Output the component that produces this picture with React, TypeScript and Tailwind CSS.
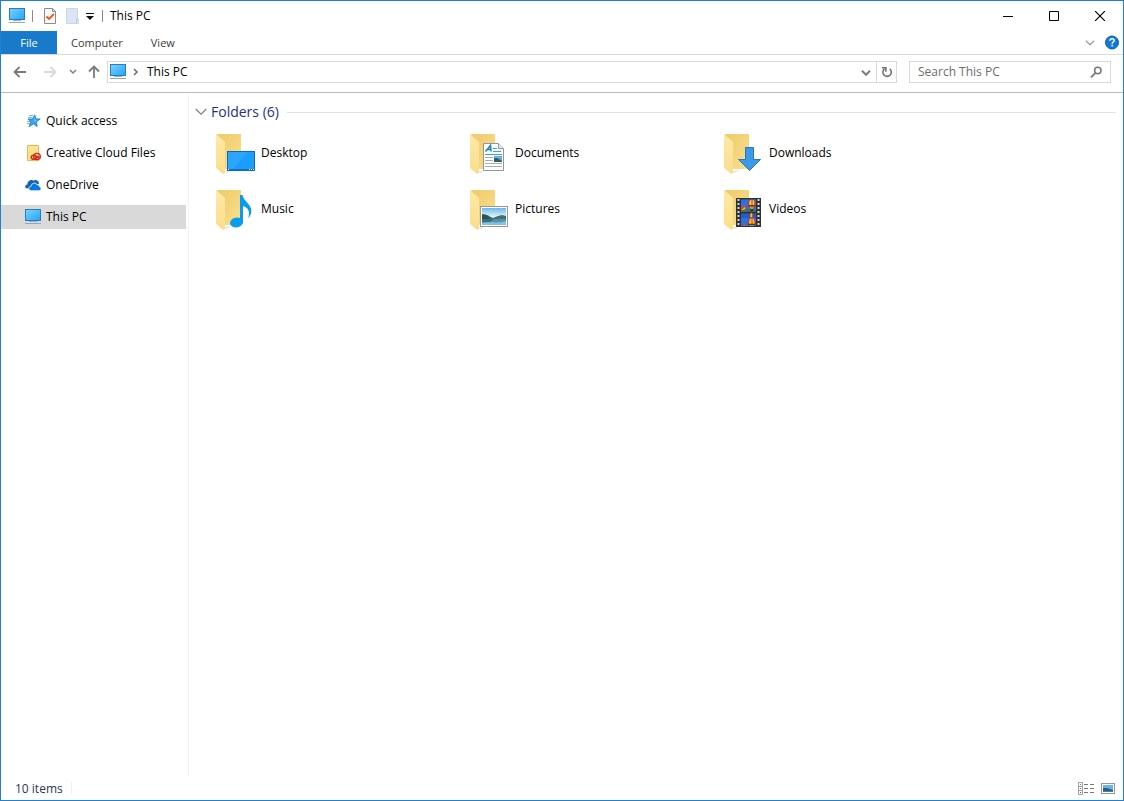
import React from 'react';

interface IconProps {
  className?: string;
}

interface FolderEntry {
  name: string;
  overlay: React.ReactNode;
}

const MonitorIcon: React.FC<IconProps> = ({ className }) => (
  <svg width="16" height="16" viewBox="0 0 16 16" className={className} aria-hidden="true">
    <defs>
      <linearGradient id="screen" x1="0" y1="0" x2="1" y2="1">
        <stop offset="0" stopColor="#7fd0ff" />
        <stop offset="0.5" stopColor="#4dbcff" />
        <stop offset="1" stopColor="#22a4ff" />
      </linearGradient>
    </defs>
    <rect x="0.5" y="0.5" width="15" height="11" fill="url(#screen)" stroke="#2d7db5" />
    <rect x="6" y="12" width="4" height="1" fill="#c3d0dc" />
    <rect x="4" y="12" width="8" height="1" fill="#9fb1c4" />
    <rect x="0" y="14" width="16" height="1" fill="#93a5ba" />
  </svg>
);

const CheckDocIcon: React.FC = () => (
  <svg width="12" height="16" viewBox="0 0 12 16" aria-hidden="true">
    <path d="M.5.5h8l3 3v12H.5z" fill="#f8f8f8" stroke="#8c8c8c" />
    <path d="M8.5.5v3h3" fill="none" stroke="#8c8c8c" />
    <path d="M2.5 8.500l2.500 2.500 5-5" fill="none" stroke="#f0561d" strokeWidth="1.800" />
  </svg>
);

const PaleFolderIcon: React.FC = () => (
  <svg width="13" height="16" viewBox="0 0 13 16" aria-hidden="true">
    <path d="M.5.5h11v10l1 1v4H.5z" fill="#dbe5f5" stroke="#c9d6ea" />
    <path d="M10.5 15v-4h2" fill="none" stroke="#bccbe2" />
  </svg>
);

const ChevronDown: React.FC<IconProps> = ({ className }) => (
  <svg width="10" height="6" viewBox="0 0 10 6" className={className} fill="none" stroke="currentColor" aria-hidden="true">
    <path d="M1 .8l4 4 4-4" />
  </svg>
);

const BackArrow: React.FC<IconProps> = ({ className }) => (
  <svg width="14" height="12" viewBox="0 0 14 12" className={className} fill="none" stroke="currentColor" strokeWidth="1.8" aria-hidden="true">
    <path d="M13 6H2M6.5 1L1.500 6l5 5" />
  </svg>
);

const StarIcon: React.FC = () => (
  <svg width="16" height="16" viewBox="0 0 16 16" aria-hidden="true">
    <path d="M9.8 1.800l1 4 4.400.2-3.600 2.800.6 4.700-3.900-2.500-4.200 2.700 1.600-4.900L3 6h4.300z" fill="#35a5e8" stroke="#1b7fc4" strokeWidth=".8" />
    <path d="M4 2.500h4M3 4.500h4M2 8.500h3M2 10.500h3" stroke="#6fbdea" />
    <path d="M9.500 4l.8 3 2.500.1-3.800 2z" fill="#5fc0f4" />
  </svg>
);

const CreativeCloudIcon: React.FC = () => (
  <svg width="16" height="16" viewBox="0 0 16 16" aria-hidden="true">
    <path d="M2.5.5h11v15h-11z" fill="#fce48e" stroke="#e5b951" />
    <g fill="none" stroke="#d9251d" strokeWidth="1.400">
      <ellipse cx="8.800" cy="12.300" rx="2.600" ry="2.100" />
      <ellipse cx="12" cy="11.500" rx="3.300" ry="3.100" />
      <path d="M8.500 10.800c2-.8 3 2.200 5 2.200 1.200-.2 1-2-.5-2-1.500.2-2 2.500-4 2.500" strokeWidth="1.100" />
    </g>
  </svg>
);

const OneDriveIcon: React.FC = () => (
  <svg width="16" height="16" viewBox="0 0 16 16" aria-hidden="true">
    <path d="M2.500 11.500C-.6 11.500-.5 7.600 2.300 7.400 2.300 4 6 2 8.500 3.600c2-1.600 5.400-.3 5.500 2.800l-6 5z" fill="#1263b8" />
    <path d="M6.500 13.800c-3.600 0-3.500-4.400-.4-4.600.4-3.600 5-4.200 6.200-1.200 2-.3 2.500 1 2.300 1.800 2.200.6 1.700 4-.7 4z" fill="#0a78d8" stroke="#fff" strokeWidth=".8" />
  </svg>
);

const DesktopOverlay: React.FC = () => (
  <>
    <rect x="11.500" y="17.500" width="27" height="19" fill="#1a9dff" stroke="#0c6db8" />
    <path d="M12 18h20L17 35h-5z" fill="#2ba5ff" />
    <path d="M12 35.500h26" stroke="#0b72bf" />
    <path d="M12 35.500h1M33 35.500h1M35 35.500h1M37 35.500h1" stroke="#fff" />
  </>
);

const MusicOverlay: React.FC = () => (
  <>
    <ellipse cx="20.500" cy="32.500" rx="6.500" ry="4.900" transform="rotate(-12 20.5 32.5)" fill="#079bf2" />
    <path d="M24 5h2.500c.7 6 9 9 8.800 16-.2 3-1 5-3 7.500 1.800-6.500.5-11-5.300-12.500v17h-3z" fill="#079bf2" />
  </>
);

const DocumentOverlay: React.FC = () => (
  <>
    <path d="M13.500 9.500h15l5 5v22h-20z" fill="#fff" stroke="#8f979d" />
    <path d="M28.500 9.500v5h5" fill="#e6e9eb" stroke="#8f979d" />
    <path d="M15.500 17.500L20.500 11.500l.5 6M17.500 15.500h3.500" fill="none" stroke="#167fc5" strokeWidth="1.500" />
    <path d="M23 14.500h4M23 17.500h8M15 20.500h17" stroke="#36a2dd" />
    <path d="M15 23.500h8M15 26.500h8M15 29.500h17M15 32.500h17" stroke="#a8adb1" />
    <rect x="24" y="22" width="8" height="6" fill="#66aee0" />
    <path d="M24 24l3 0 5 3v1h-8z" fill="#315f55" />
  </>
);

const PictureOverlay: React.FC = () => (
  <>
    <defs>
      <linearGradient id="sky" x1="0" y1="0" x2="0" y2="1">
        <stop offset="0" stopColor="#6eb6ec" />
        <stop offset="0.5" stopColor="#def1fa" />
        <stop offset="1" stopColor="#9fd0ea" />
      </linearGradient>
    </defs>
    <rect x="10.500" y="16.500" width="27" height="20" fill="#fff" stroke="#8f999f" />
    <rect x="12" y="18" width="24" height="17" fill="url(#sky)" />
    <path d="M12 24c4-.5 7 2 11 4l5-2 4-1 4 1v4H12z" fill="#48705a" />
    <path d="M12 25l4 0 5 4h-9z" fill="#2b5740" />
    <path d="M12 29h24v6H12z" fill="#4a93bd" />
    <path d="M12 29h12l-4 3h-8z" fill="#337089" />
    <path d="M12 33c8-2 15 1 24-2v4H12z" fill="#8bc1d8" />
  </>
);

const DownloadOverlay: React.FC = () => (
  <path d="M21.5 13.500h8v12h7L25.500 36.500l-11-11h7z" fill="#3c9ae8" stroke="#2777bd" />
);

const BalloonScene: React.FC = () => (
  <>
    <rect width="16" height="13" fill="#2f6fe0" />
    <path d="M0 9l4-3 2 3-2 4H0z" fill="#e23f35" />
    <path d="M1 11l3-3 1 3-2 2z" fill="#f5b31c" />
    <path d="M0 12l6-2 10 1v2H0z" fill="#2c8148" />
    <path d="M7 5c0-6 9-6 9 0 0 2-2 4-3 5h-3C9 9 7 7 7 5z" fill="#d62f2a" />
    <path d="M9.500 1c-1.500 3-1 6 1 9h2c2-3 2.500-6 1-9l-2-.6z" fill="#ffc51f" />
    <path d="M11 .5h1.500v9H11z" fill="#e95f23" />
    <path d="M7.300 6h8.500l-1 1.500H8.200z" fill="#1e4b4d" />
    <path d="M10 10.500h3v2h-3z" fill="#4c2020" />
  </>
);

const VideoOverlay: React.FC = () => (
  <>
    <rect x="12" y="8" width="25" height="29" fill="#2f3132" />
    <svg x="17" y="9" width="15" height="13" viewBox="0 0 16 13">
      <BalloonScene />
    </svg>
    <svg x="17" y="23" width="15" height="13" viewBox="0 0 16 13">
      <path d="M0 0h16v13H0z" fill="#245bd0" />
      <path d="M8 0h6l-1 3-2 2-2-2z" fill="#b62b25" />
      <path d="M10 0h2v4h-2z" fill="#ffc51f" />
      <g transform="translate(0 5)"><BalloonScene /></g>
    </svg>
    <path d="M14.500 9v27M34.500 9v27" stroke="#d5d8da" strokeWidth="2" strokeDasharray="2 2" />
  </>
);

const FolderIcon: React.FC<{ children: React.ReactNode }> = ({ children }) => (
  <svg width="40" height="42" viewBox="0 0 40 42" className="shrink-0" aria-hidden="true">
    <defs>
      <linearGradient id="folder-back" x1="0" y1="0" x2="1" y2="1">
        <stop offset="0" stopColor="#eecb6b" />
        <stop offset="1" stopColor="#fbdf8c" />
      </linearGradient>
      <linearGradient id="folder-front" x1="0" y1="0" x2="0" y2="1">
        <stop offset="0" stopColor="#ffe9a8" />
        <stop offset="1" stopColor="#fbdd8b" />
      </linearGradient>
    </defs>
    <path d="M9 37l7-2-6 5z" fill="#e9e9e9" />
    <path d="M1 0h24v35H9z" fill="url(#folder-back)" />
    <path d="M0 0l9 8v31l-2 1-7-6z" fill="url(#folder-front)" />
    {children}
  </svg>
);

const FOLDERS: FolderEntry[] = [
  { name: 'Desktop', overlay: <DesktopOverlay /> },
  { name: 'Documents', overlay: <DocumentOverlay /> },
  { name: 'Downloads', overlay: <DownloadOverlay /> },
  { name: 'Music', overlay: <MusicOverlay /> },
  { name: 'Pictures', overlay: <PictureOverlay /> },
  { name: 'Videos', overlay: <VideoOverlay /> }
];

const PLACES = [
  { name: 'Quick access', icon: <StarIcon />, active: false },
  { name: 'Creative Cloud Files', icon: <CreativeCloudIcon />, active: false },
  { name: 'OneDrive', icon: <OneDriveIcon />, active: false },
  { name: 'This PC', icon: <MonitorIcon />, active: true }
];

const TitleBar: React.FC = () => (
  <header className="flex h-[30px] shrink-0 items-center justify-between pl-2">
    <div className="flex items-center">
      <MonitorIcon />
      <span className="ml-[7px] h-3 w-px bg-[#8c8c8c]" />
      <button aria-label="Properties" className="ml-[11px]"><CheckDocIcon /></button>
      <button aria-label="New folder" className="ml-[10px]"><PaleFolderIcon /></button>
      <button aria-label="Customize toolbar" className="ml-[7px]">
        <svg width="8" height="7" viewBox="0 0 8 7" aria-hidden="true">
          <path d="M0 0h8v1H0zM0 3h8L4 7z" fill="#111" />
        </svg>
      </button>
      <span className="ml-2 h-3 w-px bg-[#8c8c8c]" />
      <h1 className="ml-[7px]">This PC</h1>
    </div>
    <div className="flex h-full">
      <button aria-label="Minimize" className="flex w-[46px] items-center justify-center">
        <svg width="10" height="10" aria-hidden="true"><path d="M0 5.500h10" stroke="#000" /></svg>
      </button>
      <button aria-label="Maximize" className="flex w-[46px] items-center justify-center">
        <svg width="10" height="10" aria-hidden="true"><path d="M.5.5h9v9h-9z" fill="none" stroke="#000" /></svg>
      </button>
      <button aria-label="Close" className="flex w-[46px] items-center justify-center">
        <svg width="10" height="10" aria-hidden="true"><path d="M0 0l10 10M10 0L0 10" stroke="#000" strokeWidth="1.200" /></svg>
      </button>
    </div>
  </header>
);

const RibbonTabs: React.FC = () => (
  <nav className="flex h-6 shrink-0 items-stretch border-b border-[#dadbdc] text-[11px] text-[#3b3b3b]">
    <button className="w-14 bg-[#1979ca] text-white">File</button>
    <button className="ml-[14px]">Computer</button>
    <button className="ml-7">View</button>
    <div className="ml-auto flex items-center gap-[9px] pr-[3px]">
      <button aria-label="Expand the ribbon" className="text-[#a0a0a0]">
        <ChevronDown className="[stroke-width:1.5]" />
      </button>
      <button aria-label="Help">
        <svg width="16" height="16" viewBox="0 0 16 16" aria-hidden="true">
          <circle cx="8" cy="7.500" r="6.500" fill="#0f7bdc" stroke="#0c5ca6" />
          <path d="M5.900 5.800c0-3 4.300-2.700 4.300-.3 0 1.500-2 1.600-2 3.200" fill="none" stroke="#fff" strokeWidth="1.500" />
          <rect x="7.400" y="9.800" width="1.600" height="1.600" fill="#fff" />
        </svg>
      </button>
    </div>
  </nav>
);

const AddressBar: React.FC = () => (
  <div className="flex h-[38px] shrink-0 items-start border-b border-[#b9b9b9] pt-1.5 pr-3">
    <div className="flex h-[22px] w-[106px] shrink-0 items-center pl-3">
      <button aria-label="Back" className="text-[#7a7a7a]"><BackArrow /></button>
      <button aria-label="Forward" className="ml-4 text-[#d9d9d9]"><BackArrow className="rotate-180" /></button>
      <button aria-label="Recent locations" className="ml-3 text-[#808080]">
        <svg width="8" height="6" viewBox="0 0 8 6" fill="none" stroke="currentColor" strokeWidth="1.5" aria-hidden="true">
          <path d="M1 1l3 3 3-3" />
        </svg>
      </button>
      <button aria-label="Up" className="ml-[10px] text-[#7a7a7a]"><BackArrow className="rotate-90" /></button>
    </div>
    <div className="flex h-[22px] min-w-0 flex-1 items-stretch border border-[#d9d9d9]">
      <div className="flex items-center pl-0.5">
        <MonitorIcon />
        <svg width="6" height="8" viewBox="0 0 6 8" className="ml-[7px]" fill="none" stroke="#6d6d6d" strokeWidth="1.5" aria-hidden="true">
          <path d="M1 1l3 3-3 3" />
        </svg>
        <a href="#this-pc" className="ml-2">This PC</a>
      </div>
      <button aria-label="Previous locations" className="ml-auto w-5 text-[#7a7a7a]">
        <ChevronDown className="mx-auto mt-0.5 stroke-2" />
      </button>
      <button aria-label="Refresh" className="flex w-5 items-center justify-center border-l border-[#d9d9d9]">
        <svg width="12" height="12" viewBox="0 0 12 12" fill="none" stroke="#747474" strokeWidth="1.6" aria-hidden="true">
          <path d="M8.700 2.900a4.200 4.200 0 1 1-5.200 0M1 1.800h3.900v3.900" />
        </svg>
      </button>
    </div>
    <label className="ml-3 flex h-[22px] w-[202px] shrink-0 items-center border border-[#d9d9d9] px-2">
      <input
        type="search"
        aria-label="Search This PC"
        placeholder="Search This PC"
        className="min-w-0 flex-1 outline-none placeholder:text-[#6d6d6d]"
      />
      <svg width="12" height="12" viewBox="0 0 12 12" fill="none" stroke="#7a7a7a" strokeWidth="1.600" aria-hidden="true">
        <circle cx="7.800" cy="4.500" r="3.200" />
        <path d="M5.500 6.800L1 11.300" strokeWidth="1.900" />
      </svg>
    </label>
  </div>
);

const Sidebar: React.FC = () => (
  <aside className="flex w-[188px] shrink-0 flex-col gap-2 border-r border-[#f3f3f3] pt-4 pr-0.5">
    {PLACES.map((place) => (
      <a
        key={place.name}
        href="#place"
        className={`flex h-6 items-center gap-[5px] pl-6 ${place.active ? 'bg-[#d9d9d9]' : ''}`}
      >
        {place.icon}
        {place.name}
      </a>
    ))}
  </aside>
);

const FolderList: React.FC = () => (
  <main className="min-w-0 flex-1 pt-2 pr-[7px] pl-[6px]">
    <div className="flex h-[22px] items-center">
      <button aria-label="Collapse folders" className="text-[#808080]">
        <svg width="12" height="8" viewBox="0 0 12 8" fill="none" stroke="currentColor" aria-hidden="true">
          <path d="M.8 1l5.200 5.200L11.200 1" strokeWidth="1.200" />
        </svg>
      </button>
      <h2 className="ml-1 text-sm text-[#1e3287]">Folders (6)</h2>
      <span className="ml-2 h-px flex-1 bg-[#e2e2e2]" />
    </div>
    <ul className="mt-[11px] grid grid-cols-[repeat(auto-fill,254px)] gap-y-[14px] pl-[21px]">
      {FOLDERS.map((folder) => (
        <li key={folder.name}>
          <a href="#folder" className="flex items-start gap-[5px]">
            <FolderIcon>{folder.overlay}</FolderIcon>
            <span className="pt-[11px]">{folder.name}</span>
          </a>
        </li>
      ))}
    </ul>
  </main>
);

const StatusBar: React.FC = () => (
  <footer className="flex h-6 shrink-0 items-center pr-2 pl-[14px] text-[#1e395b]">
    <span className="pt-0.5">10 items</span>
    <span className="ml-2 h-3 w-px bg-[#f0f0f0]" />
    <div className="ml-auto flex items-center gap-[7px]">
      <button aria-label="Details view">
        <svg width="16" height="13" viewBox="0 0 16 13" fill="none" aria-hidden="true">
          <path d="M.5.5h4v4h-4zM.5 4.500h4v4h-4zM.5 8.500h4v4h-4z" stroke="#a0a0a0" />
          <path d="M2 2.500h1" stroke="#777" />
          <path d="M2 6.500h1" stroke="#1d8dd8" />
          <path d="M2 10.500h1" stroke="#d22" />
          <path d="M6 2.500h4M12 2.500h4M6 6.500h4M12 6.500h4M6 10.500h4M12 10.500h4" stroke="#777" />
        </svg>
      </button>
      <button aria-label="Large icons view">
        <svg width="14" height="11" viewBox="0 0 14 11" aria-hidden="true">
          <rect x=".5" y=".5" width="13" height="10" fill="#fff" stroke="#969696" />
          <rect x="2" y="2" width="10" height="7" fill="#64b2ee" />
          <path d="M2 5l4 0 6 2v1H2z" fill="#315f72" />
          <path d="M2 8h10v1H2z" fill="#3980bf" />
        </svg>
      </button>
    </div>
  </footer>
);

export default function App() {
  return (
    <div className="flex min-h-screen flex-col border border-[#1883d7] bg-white font-['Open_Sans','Noto_Sans',sans-serif] text-[12px] leading-4 text-black">
      <TitleBar />
      <RibbonTabs />
      <AddressBar />
      <div className="flex flex-1">
        <Sidebar />
        <FolderList />
      </div>
      <StatusBar />
    </div>
  );
}
